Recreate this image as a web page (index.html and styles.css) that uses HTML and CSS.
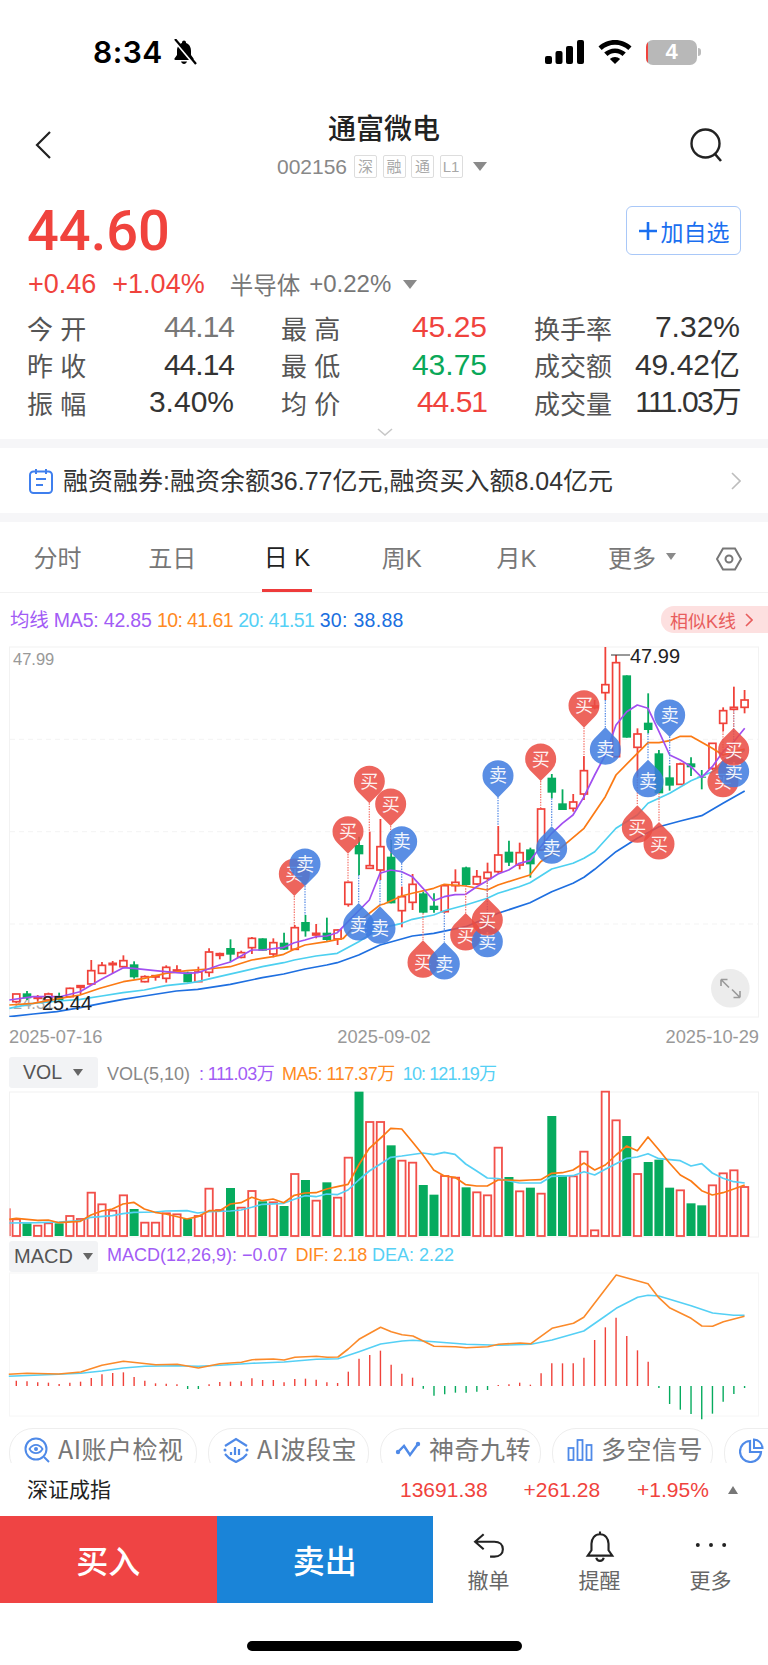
FILE: index.html
```html
<!DOCTYPE html>
<html lang="zh-CN">
<head>
<meta charset="utf-8">
<title>通富微电</title>
<link rel="stylesheet" href="styles.css">
</head>
<body>
<div class="page">
  <header class="status">
    <span class="time">8:34</span>
    <svg class="bell-off" viewBox="0 0 26 26"><path d="M13 1.500c-1 0-2 .8-2 2v.6C7.600 5.100 6 8.600 6 12v4l-2.500 3.500c-.4.700 0 1.500.9 1.500h17.200c.9 0 1.300-.8.900-1.500L20 16v-4c0-3.400-1.600-6.900-5-7.900v-.6c0-1.200-1-2-2-2z" fill="#000"/><path d="M10 22.500c.5 1.500 1.600 2.500 3 2.500s2.500-1 3-2.500z" fill="#000"/><path d="M2.500 0l20 24" stroke="#fff" stroke-width="3"/><path d="M4 0l21 25" stroke="#000" stroke-width="2.200"/></svg>
    <div class="status-right">
      <svg class="signal" viewBox="0 0 39 24"><rect x="0" y="16" width="7" height="8" rx="2"/><rect x="10.500" y="11" width="7" height="13" rx="2"/><rect x="21" y="6" width="7" height="18" rx="2"/><rect x="32" y="0" width="7" height="24" rx="2"/></svg>
      <svg class="wifi" viewBox="0 0 34 24"><path d="M17 0C10.500 0 4.800 2.500 .5 6.500l3.200 3.400C7.200 6.700 11.900 4.700 17 4.700s9.800 2 13.300 5.200l3.200-3.400C29.200 2.500 23.500 0 17 0z"/><path d="M17 8.400c-4.200 0-8 1.600-10.800 4.200l3.300 3.400c2-1.800 4.600-2.900 7.500-2.900s5.500 1.100 7.500 2.900l3.300-3.400C25 10 21.200 8.400 17 8.400z"/><path d="M17 17c-2 0-3.800.8-5.100 2L17 24l5.100-5c-1.300-1.200-3.100-2-5.100-2z"/></svg>
      <div class="battery"><span class="battery-body"><span class="battery-low"></span>4</span><span class="battery-tip"></span></div>
    </div>
  </header>

  <nav class="nav">
    <svg class="back" viewBox="0 0 16 28"><path d="M15 1L2 14l13 13" fill="none" stroke="#222" stroke-width="2.200"/></svg>
    <div class="nav-mid">
      <h1 class="title">通富微电</h1>
      <div class="sub">
        <span class="code">002156</span>
        <span class="tag">深</span><span class="tag">融</span><span class="tag">通</span><span class="tag">L1</span>
        <span class="tri tri-sub"></span>
      </div>
    </div>
    <svg class="search" viewBox="0 0 34 34"><circle cx="15.500" cy="15.500" r="14" fill="none" stroke="#222" stroke-width="2.400"/><path d="M25 26l6 7" stroke="#222" stroke-width="2.600"/></svg>
  </nav>

  <section class="quote">
    <div class="price-row">
      <span class="price">44.60</span>
      <button class="add"><svg class="add-plus" viewBox="0 0 20 20"><path d="M10 1v18M1 10h18" stroke="#1a6ff0" stroke-width="2.600"/></svg>加自选</button>
    </div>
    <div class="change-row">
      <span class="up ch1">+0.46</span><span class="up ch2">+1.04%</span>
      <span class="sector">半导体</span><span class="sector-v">+0.22%</span><span class="tri tri-sec"></span>
    </div>
    <div class="stats">
      <div class="cell"><span class="lab">今 开</span><span class="val grey tight1">44.14</span></div>
      <div class="cell"><span class="lab">最 高</span><span class="val up">45.25</span></div>
      <div class="cell"><span class="lab">换手率</span><span class="val dark">7.32%</span></div>
      <div class="cell"><span class="lab">昨 收</span><span class="val dark tight1">44.14</span></div>
      <div class="cell"><span class="lab">最 低</span><span class="val down">43.75</span></div>
      <div class="cell"><span class="lab">成交额</span><span class="val dark">49.42亿</span></div>
      <div class="cell"><span class="lab">振 幅</span><span class="val dark">3.40%</span></div>
      <div class="cell"><span class="lab">均 价</span><span class="val up tight1">44.51</span></div>
      <div class="cell"><span class="lab">成交量</span><span class="val dark tight2">111.03万</span></div>
    </div>
    <div class="more-row"><svg class="more-chev" viewBox="0 0 16 8"><path d="M1 1l7 6 7-6" fill="none" stroke="#c8c8c8" stroke-width="1.600"/></svg></div>
  </section>

  <div class="band"></div>
  <section class="notice">
    <svg class="notice-ico" viewBox="0 0 24 26"><rect x="1" y="3.500" width="22" height="21.500" rx="3.500" fill="none" stroke="#3f7fee" stroke-width="2"/><path d="M7 1v5M17 1v5M7 11h10M7 17h7" stroke="#3f7fee" stroke-width="2" fill="none"/></svg>
    <span class="notice-text">融资融券:融资余额36.77亿元,融资买入额8.04亿元</span>
    <svg class="notice-chev" viewBox="0 0 10 18"><path d="M1 1l8 8-8 8" fill="none" stroke="#bdbdbd" stroke-width="1.600"/></svg>
  </section>
  <div class="band"></div>

  <div class="tabs">
    <span class="tab">分时</span>
    <span class="tab">五日</span>
    <span class="tab tab-on"><span class="tab-line">日 K</span></span>
    <span class="tab">周K</span>
    <span class="tab">月K</span>
    <span class="tab-more">更多<span class="tri tri-more"></span></span>
    <svg class="hex" viewBox="0 0 26 24"><path d="M7 1.500h12L25 12l-6 10.500H7L1 12z" fill="none" stroke="#777" stroke-width="2"/><circle cx="13" cy="12" r="3.500" fill="none" stroke="#777" stroke-width="2"/></svg>
  </div>

  <div class="legend">
    <span class="legend-text"><span class="c-pu lg-a">均线 MA5: 42.85</span> <span class="c-or lg-b">10: 41.61</span> <span class="c-cy lg-b">20: 41.51</span> <span class="c-bl lg-c">30: 38.88</span></span>
    <span class="similar">相似K线<svg class="similar-chev" viewBox="0 0 8 14"><path d="M1 1l6 6-6 6" fill="none" stroke="#e85d5d" stroke-width="1.600"/></svg></span>
  </div>
  <svg id="kline" class="chart chart-k" viewBox="0 633 768 388"></svg>
  <div class="dates"><span>2025-07-16</span><span>2025-09-02</span><span>2025-10-29</span></div>

  <div class="ind-head ind-vol">
    <span class="ind-tab">VOL<span class="tri tri-ind"></span></span>
    <span class="ind-text"><span class="c-gr">VOL(5,10)</span><span class="c-pu vol-v">: 111.03万</span> <span class="c-or vol-a">MA5: 117.37万</span> <span class="c-cy vol-b">10: 121.19万</span></span>
  </div>
  <svg id="vol" class="chart chart-vol" viewBox="0 1088 768 152"></svg>

  <div class="ind-head">
    <span class="ind-tab">MACD<span class="tri tri-ind"></span></span>
    <span class="ind-text"><span class="c-pu">MACD(12,26,9): −0.07</span> <span class="c-or dif">DIF: 2.18</span> <span class="c-cy">DEA: 2.22</span></span>
  </div>
  <svg id="macd" class="chart chart-macd" viewBox="0 1272 768 148"></svg>

  <div class="chips">
    <div class="chip chip-1"><svg class="chip-ico" viewBox="0 0 26 26"><circle cx="12" cy="12" r="10.500" fill="none" stroke="#4f8ae8" stroke-width="2"/><path d="M5.500 12c1.800-3 4-4.200 6.500-4.200s4.700 1.200 6.500 4.200c-1.800 3-4 4.200-6.500 4.200S7.300 15 5.500 12z" fill="none" stroke="#4f8ae8" stroke-width="1.800"/><circle cx="12" cy="12" r="2" fill="#4f8ae8"/><path d="M20 20l5 5" stroke="#4f8ae8" stroke-width="2"/></svg>AI账户检视</div>
    <div class="chip chip-2"><svg class="chip-ico" viewBox="0 0 26 26"><path d="M2 9l11-7 11 7M2 17l4 4 7 4 7-4 4-4" fill="none" stroke="#4f8ae8" stroke-width="2.200"/><path d="M8 15v3M12 10v8M16 12v6" stroke="#4f8ae8" stroke-width="2.200"/><circle cx="2" cy="13" r="1.500" fill="#4f8ae8"/><circle cx="24" cy="13" r="1.500" fill="#4f8ae8"/></svg>AI波段宝</div>
    <div class="chip chip-2"><svg class="chip-ico" viewBox="0 0 26 26"><path d="M3 15l6-6 6 9 8-11" fill="none" stroke="#4f8ae8" stroke-width="2.400"/><circle cx="3" cy="15" r="2.200" fill="#4f8ae8"/><circle cx="23" cy="7" r="2.200" fill="#4f8ae8"/></svg>神奇九转</div>
    <div class="chip chip-2"><svg class="chip-ico" viewBox="0 0 26 26"><rect x="1.500" y="11" width="5" height="12" fill="none" stroke="#4f8ae8" stroke-width="1.800"/><rect x="10.500" y="3" width="5" height="20" fill="none" stroke="#4f8ae8" stroke-width="1.800"/><rect x="19.500" y="8" width="5" height="15" fill="none" stroke="#4f8ae8" stroke-width="1.800"/></svg>多空信号</div>
    <div class="chip chip-2"><svg class="chip-ico" viewBox="0 0 26 26"><path d="M11 4a10.500 10.500 0 1 0 11 11H11z" fill="none" stroke="#4f8ae8" stroke-width="2.200"/><path d="M15 2.500a9 9 0 0 1 8.500 8.500H15z" fill="none" stroke="#4f8ae8" stroke-width="2"/></svg></div>
  </div>

  <div class="index-bar">
    <span class="idx-name">深证成指</span>
    <span class="idx-v idx-a">13691.38</span>
    <span class="idx-v idx-b">+261.28</span>
    <span class="idx-v idx-c">+1.95%</span>
    <span class="tri-up"></span>
  </div>

  <div class="actions">
    <button class="trade buy">买入</button>
    <button class="trade sell">卖出</button>
    <div class="act"><svg class="act-ico" viewBox="0 0 30 26"><path d="M10 2L2 9l8 7M2 9h18c5 0 8 3 8 7s-3 7-8 7h-4" fill="none" stroke="#222" stroke-width="2"/></svg><span>撤单</span></div>
    <div class="act"><svg class="act-ico" viewBox="0 0 30 30"><path d="M15 1.500v2.500M15 4c-5 0-8 4-8 9v6l-3.500 5h23L23 19v-6c0-5-3-9-8-9zM11.500 26c.5 2 2 3 3.500 3s3-1 3.500-3" fill="none" stroke="#222" stroke-width="2"/></svg><span>提醒</span></div>
    <div class="act"><svg class="act-ico" viewBox="0 0 34 26"><circle cx="3" cy="12" r="2.100" fill="#222"/><circle cx="17" cy="12" r="2.100" fill="#222"/><circle cx="31" cy="12" r="2.100" fill="#222"/></svg><span>更多</span></div>
  </div>

  <div class="home"><span class="home-bar"></span></div>
</div>
<script src="chart.js"></script>
</body>
</html>
```
FILE: styles.css
```css
* { box-sizing: border-box; }
html, body { margin: 0; padding: 0; background: #fff; }
body { font-family: "Liberation Sans", "Noto Sans CJK SC", sans-serif; color: #222; }
.page { width: 768px; height: 1665px; overflow: hidden; }

.status { height: 104px; display: flex; align-items: center; padding: 0 67px 0 93px; }
.time { font-family: Inter, sans-serif; font-weight: 600; font-size: 30px; letter-spacing: .5px; color: #000; }
.bell-off { width: 26px; height: 26px; margin-left: 8px; }
.status-right { margin-left: auto; display: flex; align-items: center; gap: 14px; }
.signal { width: 39px; height: 24px; fill: #000; }
.wifi { width: 34px; height: 24px; fill: #000; }
.battery { display: flex; align-items: center; gap: 1px; }
.battery-body { width: 51px; height: 25px; border-radius: 7px; background: #b8b8b8; color: #fff; font-weight: 700; font-size: 22px; display: flex; align-items: center; justify-content: center; overflow: hidden; position: relative; }
.battery-low { position: absolute; left: 0; top: 0; bottom: 0; width: 2px; background: #f0433d; }
.battery-tip { width: 3px; height: 8px; background: #bbb; border-radius: 0 3px 3px 0; }

.nav { height: 88px; display: grid; grid-template-columns: 1fr auto 1fr; align-items: start; padding: 0 44px; }
.back { width: 16px; height: 28px; margin: 27px 0 0 -9px; }
.search { width: 34px; height: 34px; margin-top: 24px; justify-self: end; }
.nav-mid { display: flex; flex-direction: column; align-items: center; }
.title { margin: 9px 0 0; font-size: 28px; line-height: 34px; font-weight: 500; color: #222; }
.sub { display: flex; align-items: center; margin-top: 8px; height: 23px; padding-right: 4px; }
.code { font-size: 21px; color: #888; margin-right: 7px; }
.tag { width: 23px; height: 23px; border: 1px solid #ddd; border-radius: 2px; font-size: 15px; line-height: 21px; text-align: center; color: #a8a8a8; margin-right: 5.500px; }
.tri { display: inline-block; width: 0; height: 0; border-style: solid; border-color: #8a8a8a transparent transparent transparent; }
.tri-sub { border-width: 9px 7px 0 7px; margin-left: 5px; }

.quote { padding: 14px 27px 0 28px; }
.price-row { display: flex; justify-content: space-between; align-items: center; height: 49px; }
.price { font-size: 56px; font-weight: 500; color: #f0433d; font-family: Roboto, "Liberation Sans", sans-serif; margin-left: -1px; }
.add { width: 115px; height: 49px; border: 1.500px solid #a9c8f8; border-radius: 6px; background: #fff; color: #1a6ff0; font: 23px "Noto Sans CJK SC", sans-serif; padding: 0; display: flex; align-items: center; justify-content: center; gap: 3px; }
.add-plus { width: 20px; height: 20px; }
.change-row { display: flex; align-items: center; height: 24px; margin-top: 17px; font-size: 27px; }
.up { color: #f0433d; }
.down { color: #0aa858; }
.grey { color: #777; }
.dark { color: #333; }
.ch2 { margin-left: 16px; }
.sector { margin-left: 25px; color: #777; font-size: 23.500px; }
.sector-v { margin-left: 9px; color: #777; font-size: 24px; }
.tri-sec { border-width: 9px 7px 0 7px; margin-left: 12px; }
.stats { display: grid; grid-template-columns: 207px 206px 206px; column-gap: 47px; grid-auto-rows: 37.500px; margin: 12.500px 0 0 -1px; }
.cell { display: flex; justify-content: space-between; align-items: center; }
.lab { font-size: 26px; color: #555; }
.val { font-size: 30px; line-height: 34px; }
.tight1 { letter-spacing: -1px; }
.tight2 { letter-spacing: -1.800px; }
.more-row { height: 18px; display: flex; justify-content: center; align-items: center; padding-top: 4px; }
.more-chev { width: 16px; height: 8px; }

.band { height: 9px; background: #f6f6f8; }
.notice { height: 65px; display: flex; align-items: center; padding: 0 27px 0 29px; }
.notice-ico { width: 24px; height: 26px; }
.notice-text { margin: 0 0 4px 10px; font-size: 25px; color: #333; flex: 1; }
.notice-chev { width: 10px; height: 18px; }

.tabs { height: 71px; display: flex; border-bottom: 1px solid #f2f2f2; align-items: stretch; font-size: 24px; color: #777; }
.tab { width: 114.800px; display: flex; align-items: center; justify-content: center; padding-bottom: 2px; }
.tab-on { color: #222; padding-bottom: 0; }
.tab-line { width: 50px; height: 70px; display: flex; align-items: center; justify-content: center; border-bottom: 3px solid #ee3b3b; padding-bottom: 0; }
.tab-more { margin-left: 34px; width: 72px; display: flex; align-items: center; padding-bottom: 2px; }
.tri-more { border-width: 7px 5px 0 5px; margin-left: 10px; }
.hex { width: 26px; height: 24px; margin: 25px 0 0 36px; }

.legend { height: 40px; padding: 13px 0 0 10px; display: flex; justify-content: space-between; align-items: center; font-size: 19.500px; }
.legend-text { margin-bottom: 3px; }
.lg-a { letter-spacing: -.2px; }
.lg-b { letter-spacing: -.6px; }
.lg-c { letter-spacing: .3px; }
.c-pu { color: #a25cf5; }
.c-or { color: #ff8a1f; }
.c-cy { color: #55d0f5; }
.c-bl { color: #1a6fe0; }
.c-gr { color: #888; }
.similar { width: 107px; height: 27px; border-radius: 13px 0 0 13px; background: #fde0e0; color: #e85d5d; font-size: 18px; display: flex; align-items: center; padding-left: 9px; }
.similar-chev { width: 8px; height: 14px; margin-left: 9px; }

.chart { display: block; width: 768px; }
.chart-k { height: 388px; }
.chart-vol { height: 152px; }
.chart-macd { height: 148px; }
.dates { height: 34px; display: flex; justify-content: space-between; align-items: center; padding: 0 9px 2px; font-size: 18.300px; color: #999; }

.ind-head { height: 32px; display: flex; align-items: center; padding-left: 9px; font-size: 18px; }
.ind-vol { height: 33px; padding-top: 2px; }
.ind-tab { width: 89px; height: 31px; background: #f2f3f5; border-radius: 3px; color: #555; font-size: 20px; display: flex; align-items: center; justify-content: space-between; padding: 0 5px; flex-shrink: 0; }
.ind-vol .ind-tab { padding: 0 15px 0 14px; font-size: 19.500px; }
.tri-ind { border-width: 7px 5px 0 5px; border-top-color: #666; }
.ind-text { margin: 0 0 1px 9px; white-space: nowrap; }
.vol-v { margin-left: 9px; letter-spacing: -.6px; }
.vol-a { margin-left: 3px; letter-spacing: -.5px; }
.vol-b { margin-left: 3px; letter-spacing: -.9px; }
.dif { margin-left: 3px; letter-spacing: -.3px; }

.chips { margin-top: 8px; height: 35px; display: flex; gap: 11px; padding-left: 9px; font-size: 25px; letter-spacing: .5px; color: #777; font-family: "Noto Sans CJK SC", sans-serif; }
.chip { flex-shrink: 0; height: 50px; border: 1px solid #eee; border-radius: 24px; display: flex; align-items: flex-start; padding: 5px 0 0 14px; gap: 8px; line-height: 28px; white-space: nowrap; }
.chip-1 { width: 188px; }
.chip-2 { width: 161px; }
.chip-ico { width: 26px; height: 26px; margin-top: 3px; flex-shrink: 0; }

.index-bar { position: relative; background: #fff; height: 53px; display: flex; align-items: center; padding: 0 27px 0 28px; font-size: 21px; }
.idx-name { color: #222; width: 373px; margin: 0 0 3px -1px; }
.idx-v { color: #f0433d; }
.idx-b { margin-left: 36px; }
.idx-c { margin-left: 37px; }
.tri-up { width: 0; height: 0; margin-left: 19px; border-style: solid; border-width: 0 5px 8px 5px; border-color: transparent transparent #777 transparent; }

.actions { height: 87px; display: flex; }
.trade { width: 216.500px; border: 0; color: #fff; font: 500 32px "Noto Sans CJK SC", sans-serif; padding: 0 0 2px; }
.buy { background: #ef4444; }
.sell { background: #1a84d8; }
.act { width: 111px; display: flex; flex-direction: column; align-items: center; padding-top: 14px; font-size: 21px; color: #666; }
.act-ico { width: 32px; height: 32px; }
.act span { margin-top: 2px; }

.home { height: 62px; padding-top: 38px; display: flex; justify-content: center; }
.home-bar { width: 275px; height: 10px; border-radius: 5px; background: #000; }
```
FILE: chart.js
```js
var RED = '#f0423a', GREEN = '#06ab5e';
function cx(i) { return 16.3 + 10.71 * i; }
function ky(z) { return 620 + z / 3; }
function vy(z) { return 1040 + z / 3; }
function my(z) { return 1240 + z / 3; }

// [bodyTop, bodyBottom, wickTop, wickBottom, isUp] in 3x crop units
var candles = [
[1122,1145,1122,1150,1],[1120,1135,1113,1140,0],[1131,1135,1125,1145,1],[1122,1140,1118,1150,1],[1130,1140,1118,1145,0],
[1105,1130,1103,1132,1],[1097,1102,1097,1125,1],[1052,1092,1020,1095,1],[1036,1060,1026,1062,1],[1030,1034,1023,1060,1],
[1022,1040,1006,1045,1],[1033,1072,1024,1076,0],[1070,1085,1066,1087,1],[1067,1071,1065,1082,1],[1042,1075,1036,1088,1],
[1050,1055,1036,1058,1],[1057,1087,1055,1087,0],[1056,1085,1040,1086,1],[996,1057,985,1070,1],[1001,1006,998,1018,1],
[984,1004,958,1026,0],[998,1012,992,1015,1],[955,983,951,1002,1],[955,992,955,992,0],[968,1002,955,1012,1],
[968,989,938,990,0],[923,988,915,990,1],[906,934,885,950,0],[940,945,912,955,1],[938,960,893,962,0],
[930,957,928,975,1],[787,853,785,860,1],[675,703,650,765,0],[737,745,635,747,1],[680,750,597,780,1],
[710,850,660,850,0],[830,872,800,922,1],[793,847,762,870,1],[820,878,815,880,0],[857,870,820,878,0],
[797,875,795,878,1],[787,797,748,815,1],[742,795,740,797,0],[770,792,750,795,1],[757,775,728,780,1],
[705,755,618,760,1],[695,728,662,738,0],[698,735,668,748,1],[688,733,683,773,0],[567,690,565,690,1],
[473,518,462,535,0],[550,570,508,570,0],[546,565,522,575,1],[452,522,408,540,1],[258,263,240,268,1],
[194,218,80,240,1],[128,410,105,410,1],[166,353,166,353,0],[342,382,325,470,1],[308,330,220,340,0],
[400,520,390,520,0],[472,497,437,512,0],[432,493,428,495,1],[430,442,412,468,0],[470,473,450,508,0],
[370,445,370,450,1],[272,310,262,333,1],[262,268,200,270,1],[240,262,210,280,1]];

var volTops = [[538,1],[550,0],[557,1],[550,1],[550,0],[528,1],[537,1],[458,1],[493,1],[512,1],[466,1],[507,0],[548,1],[548,1],[520,1],[523,1],[537,0],[528,1],[446,1],[510,1],[444,0],[503,1],[453,1],[484,0],[487,1],[498,0],[402,1],[420,0],[482,1],[427,0],[473,1],[353,1],[155,0],[246,1],[246,1],
[316,0],[362,1],[368,1],[435,0],[464,0],[408,1],[413,1],[442,0],[457,1],[466,1],[323,1],[411,0],[454,1],[443,0],[461,1],[228,0],[405,0],[409,1],[335,1],[571,1],[155,1],[241,1],[288,0],[402,1],[366,0],[359,0],[443,0],[451,1],[490,0],[496,0],[436,1],[400,1],[391,1],[441,1]];

var hist = [422,424,427,428,432,428,425,414,403,399,397,411,422,430,431,433,447,447,433,426,425,424,415,420,420,427,417,416,419,427,429,395,356,345,332,374,401,413,446,467,463,458,458,455,450,435,433,428,434,400,370,370,370,353,300,262,233,288,331,365,444,492,509,522,538,521,485,462,444];

var R = 1152; // x offset of the right-hand crop
function shift(a) { return a.map(function (p) { return [p[0] + R, p[1]]; }); }
var ma5 = [[28,1140],[100,1130],[180,1130],[240,1115],[300,1080],[370,1043],[401,1045],[465,1052],[529,1058],[561,1060],[593,1058],[657,1036],[691,1026],[755,990],[787,990],[851,982],[883,968],[915,960],[948,950],[980,948],[1012,938],[1044,905],[1108,840],[1140,760]].concat(shift([[20,750],[53,755],[85,770],[117,805],[149,842],[181,830],[213,824],[245,823],[278,800],[310,782],[342,762],[374,750],[406,730],[438,722],[470,680],[503,640],[535,610],[567,585],[600,530],[632,465],[664,405],[696,315],[728,275],[760,255],[792,265],[825,335],[857,405],[889,420],[921,440],[953,472],[985,440],[1017,395],[1049,365],[1082,325]]));
var ma10 = [[28,1155],[100,1150],[180,1135],[240,1125],[300,1105],[370,1085],[433,1075],[497,1060],[561,1052],[625,1047],[691,1040],[755,1020],[819,1010],[851,1003],[883,988],[915,975],[980,965],[1030,955],[1076,905],[1140,855]].concat(shift([[0,852],[53,828],[85,820],[149,805],[181,793],[245,798],[310,810],[342,795],[406,775],[438,765],[470,725],[535,680],[600,625],[664,530],[696,465],[760,400],[792,368],[825,368],[857,362],[889,349],[921,349],[985,385],[1017,405],[1049,395],[1082,387]]));
var ma20 = [[28,1165],[100,1150],[177,1143],[241,1138],[305,1128],[369,1118],[433,1110],[497,1097],[561,1090],[593,1085],[657,1070],[723,1055],[787,1040],[851,1028],[883,1020],[948,1008],[1012,1000],[1076,965],[1140,925]].concat(shift([[53,910],[85,898],[149,885],[181,872],[245,855],[310,835],[342,820],[406,800],[438,788],[503,747],[567,730],[600,715],[632,695],[696,625],[760,585],[792,550],[857,520],[921,482],[985,455],[1049,415],[1082,390]]));
var ma30 = [[28,1190],[100,1182],[170,1175],[241,1163],[305,1150],[369,1138],[433,1128],[529,1113],[593,1108],[691,1093],[787,1073],[851,1062],[915,1047],[980,1035],[1012,1028],[1076,1005],[1140,975]].concat(shift([[85,948],[149,940],[245,920],[342,880],[438,848],[503,815],[567,790],[600,772],[632,748],[696,695],[760,655],[825,620],[889,603],[953,587],[1017,550],[1082,513]]));

// marker: [x, circle centre y, direction ('d' tip below, 'u' tip above), kind, connector y1, connector y2]
var markers = [
[883,762,'d','b',828,915],[915,732,'d','s',798,885],[1044,635,'d','b',702,785],[1108,484,'d','b',550,635],
[1076,915,'u','s',765,848],[1140,925,'u','s',780,858],[1172,552,'d','b',618,700],
[R+53,665,'d','s',730,800],[R+117,1027,'u','b',880,960],[R+181,1032,'u','s',878,965],
[R+245,945,'u','b',797,878],[R+310,965,'u','s',780,897],[R+310,900,'u','b',780,835],
[R+342,467,'d','s',532,618],[R+470,417,'d','b',483,565],[R+503,685,'u','s',535,618],
[R+600,257,'d','b',323,408],[R+664,388,'u','s',240,322],[R+857,285,'d','s',350,437],
[R+760,622,'u','b',470,555],[R+825,672,'u','b',520,605],[R+792,485,'u','s',340,418],
[R+1017,485,'u','b',333,418],[R+1049,455,'u','s',270,388],[R+1049,390,'u','b',270,322]];

function poly(points, color, w) {
  return '<polyline fill="none" stroke="' + color + '" stroke-width="' + w + '" stroke-linejoin="round" points="' +
    points.map(function (p) { return p[0].toFixed(1) + ',' + p[1].toFixed(1); }).join(' ') + '"/>';
}
function toK(a) { return a.map(function (p) { return [p[0] / 3, ky(p[1])]; }); }
function toV(a) { return a.map(function (p) { return [p[0] / 3, vy(p[1])]; }); }
function toM(a) { return a.map(function (p) { return [p[0] / 2.0417, my(p[1])]; }); }
function frame(y1, y2) {
  return '<rect x="9.5" y="' + y1 + '" width="749" height="' + (y2 - y1) + '" fill="none" stroke="#f2f2f2"/>';
}

function drawK() {
  var h = frame(647, 1017);
  [358, 635, 912].forEach(function (z) {
    h += '<line x1="10" x2="758" y1="' + ky(z) + '" y2="' + ky(z) + '" stroke="#f3f3f3" stroke-dasharray="5 4"/>';
  });
  h += '<defs><clipPath id="plot"><rect x="9" y="647" width="750" height="370"/></clipPath></defs>';
  h += '<text x="13" y="665" font-size="16.5" fill="#999">47.99</text>';
  h += '<text x="13" y="1009" font-size="16.5" fill="#aaa">24.31</text>';
  h += '<g clip-path="url(#plot)">';
  candles.forEach(function (c, i) {
    var x = cx(i), col = c[4] ? RED : GREEN;
    h += '<line x1="' + x + '" x2="' + x + '" y1="' + ky(c[2]) + '" y2="' + ky(c[3]) + '" stroke="' + col + '" stroke-width="1.8"/>';
    if (c[4]) {
      h += '<rect x="' + (x - 3.5) + '" y="' + ky(c[0]) + '" width="7" height="' + (c[1] - c[0]) / 3 + '" fill="#fff" stroke="' + col + '" stroke-width="1.7"/>';
    } else {
      h += '<rect x="' + (x - 4.3) + '" y="' + ky(c[0]) + '" width="8.6" height="' + (c[1] - c[0]) / 3 + '" fill="' + col + '"/>';
    }
  });
  h += poly(toK(ma30), '#1e6fe0', 1.7) + poly(toK(ma20), '#4dd0f0', 1.7) + poly(toK(ma10), '#fb7a14', 1.7) + poly(toK(ma5), '#a14ff0', 1.7);
  markers.forEach(function (m) {
    var x = m[0] / 3, y = ky(m[1]), buy = m[3] === 'b';
    var fill = buy ? '#ea4c42' : '#3f7ce0', dash = buy ? '#f4786f' : '#5b8ee6';
    h += '<line x1="' + x + '" x2="' + x + '" y1="' + ky(m[4]) + '" y2="' + ky(m[5]) + '" stroke="' + dash + '" stroke-width="1.3" stroke-dasharray="1.4 1.2"/>';
    var flip = m[2] === 'u' ? ' scale(1 -1)' : '';
    h += '<path transform="translate(' + x + ' ' + y + ')' + flip + '" d="M0,22 L-11,10.9 A15.5,15.5 0 1 1 11,10.9 Z" fill="' + fill + '" fill-opacity=".86"/>';
    h += '<text x="' + x + '" y="' + (y + 6.5) + '" text-anchor="middle" font-size="18" fill="#fff" fill-opacity=".92">' + (buy ? '买' : '卖') + '</text>';
  });
  h += '</g>';
  h += '<line x1="611" x2="630" y1="655" y2="655" stroke="#333" stroke-width="1"/>';
  h += '<text x="630" y="663" font-size="20" fill="#222">47.99</text>';
  h += '<text x="42" y="1010" font-size="20" fill="#222">25.44</text>';
  h += '<circle cx="730.3" cy="988.3" r="19.3" fill="#ececec"/>';
  h += '<path d="M721 979.5l8 8M721 979.500h6.500M721 979.500v6.500M740 997.500l-8-8M740 997.500h-6.500M740 997.500v-6.500" fill="none" stroke="#999" stroke-width="1.600"/>';
  document.getElementById('kline').innerHTML = h;
}

function drawVol() {
  var h = frame(1092, 1237);
  var base = vy(588);
  h += '<rect x="9.6" y="' + vy(505) + '" width="1" height="' + (base - vy(505)) + '" fill="' + RED + '"/>';
  volTops.forEach(function (v, i) {
    var x = cx(i), y = vy(v[0]);
    if (v[1]) {
      h += '<rect x="' + (x - 3.7) + '" y="' + y + '" width="7.4" height="' + (base - y) + '" fill="#fff" stroke="#f2504a" stroke-width="1.8"/>';
    } else {
      h += '<rect x="' + (x - 4.5) + '" y="' + y + '" width="9" height="' + (base - y) + '" fill="' + GREEN + '"/>';
    }
  });
  var orange = [[28,538],[49,535],[113,541],[145,540],[177,548],[241,544],[273,525],[305,513],[337,507],[369,492],[401,487],[433,507],[465,517],[497,522],[561,537],[593,530],[627,512],[659,512],[691,492],[723,488],[755,472],[787,482],[819,477],[851,488],[883,466],[915,459],[948,458],[980,447],[1012,440],[1044,433],[1076,375],[1108,325]].concat(shift([[0,285],[20,265],[53,267],[85,305],[117,345],[149,390],[181,408],[213,412],[245,434],[278,438],[310,438],[342,420],[374,420],[406,422],[438,420],[470,419],[503,400],[535,398],[567,390],[600,369],[632,390],[664,375],[696,345],[728,318],[760,332],[792,291],[825,330],[857,370],[889,405],[921,423],[953,452],[985,465],[1017,458],[1049,447],[1082,435]]));
  var cyan = [[28,549],[113,548],[177,546],[241,542],[273,532],[337,527],[369,521],[401,517],[465,516],[497,513],[561,512],[593,519],[627,515],[691,513],[723,510],[755,502],[787,493],[851,490],[883,478],[915,467],[948,470],[980,462],[1012,464],[1044,450],[1076,420],[1108,393]].concat(shift([[0,365],[20,352],[53,348],[117,339],[149,344],[181,337],[213,343],[245,372],[278,393],[310,414],[342,416],[406,429],[470,429],[503,409],[567,407],[600,395],[632,405],[664,388],[728,355],[760,351],[792,341],[825,356],[889,362],[921,378],[953,371],[985,399],[1017,415],[1049,425],[1082,429]]));
  h += poly(toV(cyan), '#55d0f5', 1.7) + poly(toV(orange), '#fb7a14', 1.7);
  document.getElementById('vol').innerHTML = h;
}

function drawMacd() {
  var h = '<rect x="9.5" y="1273" width="749" height="143" fill="none" stroke="#f6f6f6"/>';
  var zero = my(438);
  hist.forEach(function (z, i) {
    var x = cx(i), y = my(z), up = z < 438;
    h += '<line x1="' + x + '" x2="' + x + '" y1="' + zero + '" y2="' + y + '" stroke="' + (up ? RED : GREEN) + '" stroke-width="1.4"/>';
  });
  var dif = [[18,403],[55,400],[120,402],[165,396],[208,376],[252,364],[318,374],[362,373],[405,384],[449,371],[493,367],[515,359],[558,357],[580,360],[602,352],[646,349],[668,352],[690,351],[711,327],[733,298],[777,262],[799,275],[821,284],[843,288],[886,319],[930,320],[952,323],[996,320],[1018,313],[1062,309],[1084,311],[1127,265],[1171,250],[1192,232],[1258,105],[1323,131],[1345,173],[1367,203],[1411,235],[1433,258],[1455,259],[1477,245],[1520,229]];
  var dea = [[18,409],[120,403],[165,400],[208,393],[252,384],[296,379],[362,377],[405,379],[449,376],[515,370],[580,366],[646,358],[690,356],[733,335],[777,312],[821,303],[843,301],[886,305],[952,313],[1018,316],[1084,313],[1127,300],[1192,273],[1236,228],[1258,205],[1302,172],[1323,166],[1345,168],[1411,197],[1455,219],[1498,226],[1520,226]];
  h += poly(toM(dea), '#55d0f5', 1.6) + poly(toM(dif), '#fb8a2a', 1.6);
  document.getElementById('macd').innerHTML = h;
}

drawK();
drawVol();
drawMacd();
```
